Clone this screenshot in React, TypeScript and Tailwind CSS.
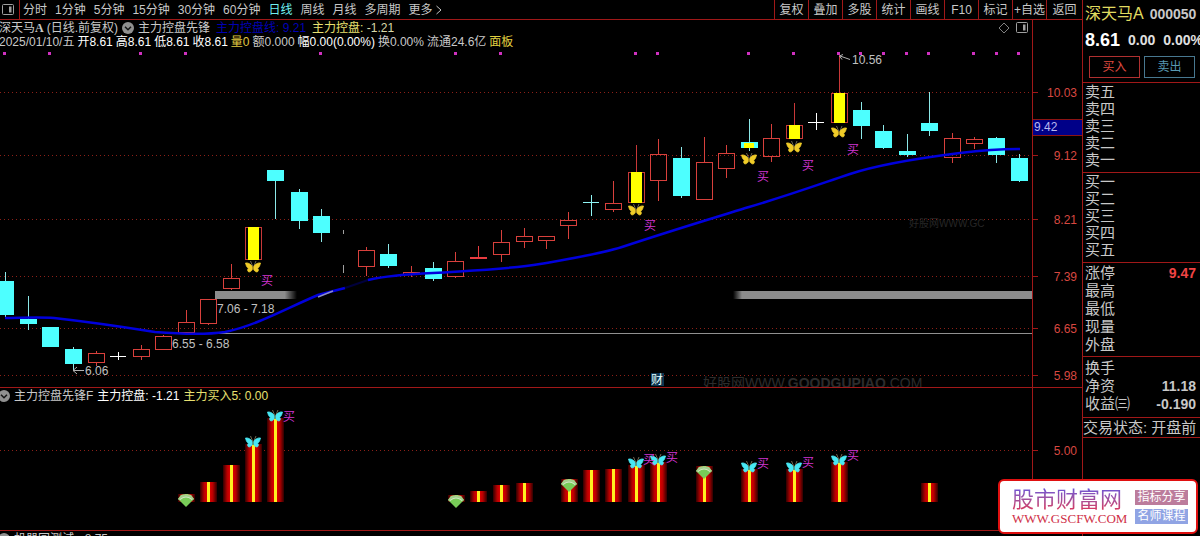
type Kind = 'up' | 'down' | 'signal' | 'downSignal' | 'cross' | 'downCross' | 'upLine';

type Candle = [x: number, high: number, top: number, bottom: number, low: number, kind: Kind];

const periods = ['分时', '1分钟', '5分钟', '15分钟', '30分钟', '60分钟', '日线', '周线', '月线', '多周期'];
const tools = ['复权', '叠加', '多股', '统计', '画线', 'F10', '标记', '+自选'];

const candles: Candle[] = [
    [5, 272, 281, 315, 318, 'down'],
    [28, 296, 319, 324, 330, 'down'],
    [50, 327, 327, 347, 347, 'down'],
    [73, 347, 349, 364, 370, 'down'],
    [96, 351, 353, 362, 366, 'up'],
    [118, 352, 356, 356, 360, 'cross'],
    [141, 345, 349, 356, 360, 'up'],
    [163, 335, 336, 349, 349, 'up'],
    [186, 310, 322, 332, 332, 'up'],
    [208, 299, 299, 323, 325, 'up'],
    [231, 264, 278, 288, 290, 'up'],
    [253, 227, 227, 259, 259, 'signal'],
    [275, 170, 170, 181, 219, 'down'],
    [299, 189, 192, 221, 229, 'down'],
    [321, 209, 216, 233, 242, 'down'],
    [366, 247, 250, 266, 276, 'up'],
    [388, 244, 254, 266, 268, 'down'],
    [411, 266, 272, 274, 277, 'up'],
    [433, 262, 268, 279, 281, 'down'],
    [455, 252, 261, 276, 278, 'up'],
    [478, 246, 258, 258, 259, 'upLine'],
    [501, 230, 242, 254, 262, 'up'],
    [524, 228, 236, 241, 248, 'up'],
    [546, 236, 236, 240, 249, 'up'],
    [568, 212, 220, 225, 239, 'up'],
    [591, 195, 202, 202, 216, 'downCross'],
    [613, 181, 203, 209, 212, 'up'],
    [636, 145, 172, 202, 202, 'signal'],
    [658, 139, 154, 180, 201, 'up'],
    [681, 147, 158, 196, 198, 'down'],
    [704, 137, 162, 199, 199, 'up'],
    [726, 145, 153, 168, 178, 'up'],
    [749, 119, 142, 148, 151, 'downSignal'],
    [771, 124, 138, 156, 162, 'up'],
    [794, 103, 125, 138, 138, 'signal'],
    [816, 113, 122, 122, 130, 'cross'],
    [839, 55, 93, 122, 122, 'signal'],
    [861, 102, 110, 126, 139, 'down'],
    [883, 125, 131, 148, 149, 'down'],
    [907, 134, 151, 155, 157, 'down'],
    [929, 92, 123, 131, 136, 'down'],
    [952, 133, 138, 157, 163, 'up'],
    [974, 137, 139, 143, 149, 'up'],
    [996, 137, 138, 155, 163, 'down'],
    [1019, 154, 158, 181, 182, 'down'],
];

const priceTicks: [number, string][] = [
    [92, '10.03'],
    [155, '9.12'],
    [219, '8.21'],
    [276, '7.39'],
    [328, '6.65'],
    [375, '5.98'],
];

const dots = [4, 49, 140, 185, 320, 455, 500, 635, 657, 748, 793, 838, 860, 883, 906, 928, 973, 996, 1018];

const signals: [number, number][] = [
    [253, 267],
    [636, 210],
    [749, 159],
    [794, 147],
    [839, 132],
];

const buyLabels: [number, number][] = [
    [267, 281],
    [650, 226],
    [763, 177],
    [808, 166],
    [853, 150],
];

// x, top, marker
const bars: [number, number, ('gem' | 'fly')?][] = [
    [186, 494, 'gem'],
    [208, 482],
    [231, 465],
    [253, 444, 'fly'],
    [275, 418, 'fly'],
    [456, 495, 'gem'],
    [478, 491],
    [501, 485],
    [524, 483],
    [569, 479, 'gem'],
    [591, 470],
    [613, 469],
    [636, 465, 'fly'],
    [658, 462, 'fly'],
    [704, 466, 'gem'],
    [749, 469, 'fly'],
    [794, 469, 'fly'],
    [839, 462, 'fly'],
    [929, 483],
];

const barBuyLabels: [number, number][] = [
    [289, 417],
    [649, 460],
    [672, 458],
    [763, 464],
    [808, 463],
    [853, 456],
];

function CandleShape({ data }: { data: Candle }) {
    const [x, high, top, bottom, low, kind] = data;
    if (kind === 'cross' || kind === 'downCross') {
        const color = kind === 'cross' ? '#ffffff' : '#8ff4f4';
        return <path d={`M${x + 0.5} ${high}V${low}M${x - 8} ${top + 0.5}h16`} stroke={color} fill="none" />;
    }
    if (kind === 'upLine') {
        return (
            <g stroke="#e83c40">
                <path d={`M${x + 0.5} ${high}V${low}`} />
                <path d={`M${x - 8} ${top}h17`} strokeWidth="2" />
            </g>
        );
    }
    if (kind === 'up') {
        return (
            <g stroke="#d8403c" fill="none">
                <path d={`M${x + 0.5} ${high}V${top}M${x + 0.5} ${bottom}V${low}`} />
                <rect x={x - 7.5} y={top + 0.5} width="16" height={bottom - top} />
            </g>
        );
    }
    if (kind === 'signal') {
        return (
            <g>
                <path d={`M${x + 0.5} ${high}V${top}`} stroke="#c83838" />
                <rect x={x - 7.5} y={top + 0.5} width="16" height={bottom - top} stroke="#c83838" fill="none" />
                <rect x={x - 5} y={top} width="11" height={bottom - top + 1} fill="#ffff00" />
            </g>
        );
    }
    return (
        <g>
            <path d={`M${x + 0.5} ${high}V${low}`} stroke="#8ce8e8" />
            <rect x={x - 8} y={top} width="17" height={bottom - top} fill="#4dffff" />
            {kind === 'downSignal' && <rect x={x - 5} y={top + 1} width="10" height={bottom - top - 1} fill="#ffff00" />}
        </g>
    );
}

function Butterfly({ x, y, color }: { x: number; y: number; color: string }) {
    return (
        <g transform={`translate(${x} ${y})`}>
            <path d="M0 0L-2.5 -6M0.5 0L3 -6" stroke="#8a8468" strokeWidth="0.8" fill="none" />
            <path
                d="M-0.5 0C-2 -3 -5 -4.5 -7.5 -4C-7 -2 -6.4 0.5 -4.6 1.2C-6 2.6 -5.4 4.6 -4 5C-2 5 -1 3 0 1.8C1 3 2 5 4 5C5.4 4.6 6 2.6 4.6 1.2C6.4 0.5 7 -2 7.5 -4C5 -4.5 2 -3 0.5 0Z"
                fill={color}
                stroke={color}
                strokeWidth="0.8"
            />
            <path d="M0 -1V3" stroke="#503c10" strokeWidth="0.8" />
        </g>
    );
}

function Gem({ x, y }: { x: number; y: number }) {
    return (
        <g transform={`translate(${x} ${y})`}>
            <path d="M-8 -1L-5 -5Q0 -6.5 5 -5L8 -1L0 7Z" fill="#78cc58" />
            <path d="M-8 -1L-5 -5Q0 -6.5 5 -5L8 -1L6 0.5Q0 -6 -6 0.5Z" fill="#a4d08c" />
            <path d="M-6 -0.5Q0 -5.5 6 -0.5" stroke="#dcecd0" strokeWidth="0.8" fill="none" />
        </g>
    );
}

function BuyLabels({ items }: { items: [number, number][] }) {
    return (
        <g fill="#d034d0" fontSize="12" textAnchor="middle">
            {items.map(([x, y]) => (
                <text key={x} x={x} y={y + 4}>买</text>
            ))}
        </g>
    );
}

function PanelIcon({ className }: { className: string }) {
    return (
        <svg viewBox="0 0 12 12" className={className} fill="none" stroke="#a0a0a0">
            <rect x="0.5" y="0.5" width="11" height="10" rx="1" />
            <rect x="7" y="2.5" width="2.5" height="6" fill="#a0a0a0" stroke="none" />
        </svg>
    );
}

function ChevronBadge() {
    return (
        <svg viewBox="0 0 12 12" className="w-3 h-3 shrink-0">
            <circle cx="6" cy="6" r="6" fill="#909090" />
            <path d="M3 4.8L6 7.8L9 4.8" stroke="#151515" strokeWidth="1.5" fill="none" />
        </svg>
    );
}

function Toolbar() {
    return (
        <nav className="flex h-5 border-b border-[#a01818] text-xs text-[#c8c8c8]">
            <button aria-label="侧栏" className="w-5 pl-0.5 border-r border-[#a01818]">
                <PanelIcon className="w-3 h-3" />
            </button>
            <div className="flex flex-1 gap-2 pl-[3px] leading-[18px]">
                {periods.map((name) => (
                    <button key={name} className={name === '日线' ? 'text-[#6ff0f0]' : ''}>{name}</button>
                ))}
                <button className="flex items-center gap-0.5">
                    更多
                    <svg viewBox="0 0 8 10" className="w-2 h-2.5" fill="none" stroke="#c8c8c8">
                        <path d="M1.5 1L6 5L1.5 9" />
                    </svg>
                </button>
            </div>
            <div className="flex leading-[18px]">
                {tools.map((name) => (
                    <button key={name} className="w-[34px] border-l border-[#a01818] whitespace-nowrap">{name}</button>
                ))}
                <button className="w-9 border-l border-[#a01818]">返回</button>
            </div>
        </nav>
    );
}

function PriceHeader() {
    return (
        <header className="flex h-7 text-xs leading-[14px] text-[#c8c8c8] whitespace-nowrap">
            <div className="flex-1 min-w-0 pt-px">
                <div className="flex items-center">
                    <span className="-ml-px">深天马<b className="font-['Liberation_Serif']">A</b></span>
                    <span className="ml-[3px]">(日线.前复权)</span>
                    <span className="mx-1 flex"><ChevronBadge /></span>
                    <span>主力控盘先锋</span>
                    <span className="ml-1.5 text-[#0000b4]">主力控盘线: 9.21</span>
                    <span className="ml-1.5 text-[#e8e070]">主力控盘: <span className="text-[#d8d8a8]">-1.21</span></span>
                    <span className="ml-auto mr-1 flex gap-1.5">
                        <svg viewBox="0 0 12 12" className="w-3 h-3" fill="none" stroke="#808080">
                            <path d="M6 1L11 6L6 11L1 6Z" />
                        </svg>
                        <PanelIcon className="w-3 h-3" />
                    </span>
                </div>
                <div className="-ml-px flex gap-[3px]">
                    <span>2025/01/10/五</span>
                    <span className="text-white">开8.61</span>
                    <span className="text-white">高8.61</span>
                    <span className="text-white">低8.61</span>
                    <span className="text-white">收8.61</span>
                    <span className="text-[#e0c840]">量0</span>
                    <span>额0.000</span>
                    <span className="text-white">幅0.00(0.00%)</span>
                    <span>换0.00%</span>
                    <span>流通24.6亿</span>
                    <span className="text-[#e0d040]">面板</span>
                </div>
            </div>
            <div className="w-[50px] border-l border-[#a01818]" />
        </header>
    );
}

function PriceChart() {
    return (
        <svg viewBox="0 48 1082 339" className="block w-full">
            <defs>
                <linearGradient id="bandLeft">
                    <stop offset="0.85" stopColor="#8c8c8c" />
                    <stop offset="1" stopColor="#000000" />
                </linearGradient>
                <linearGradient id="bandRight">
                    <stop offset="0" stopColor="#000000" />
                    <stop offset="0.03" stopColor="#8c8c8c" />
                </linearGradient>
            </defs>
            {priceTicks.map(([y, label]) => (
                <g key={label}>
                    <path d={`M0 ${y + 0.5}H1032`} stroke="#8c2018" strokeDasharray="1 3" />
                    <path d={`M1032 ${y + 0.5}h6`} stroke="#a01818" />
                    <text x="1077" y={y + 5} fill="#d84840" fontSize="12" textAnchor="end">{label}</text>
                </g>
            ))}
            <text x="909" y="227" fill="#262626" fontSize="10">好股网WWW.GC</text>
            <rect x="215" y="291" width="82" height="8" fill="url(#bandLeft)" />
            <rect x="733" y="291" width="299" height="8" fill="url(#bandRight)" />
            <path d="M209 333.5H1032" stroke="#909090" />
            {candles.map((c) => (
                <CandleShape key={c[0]} data={c} />
            ))}
            <path d="M343.5 230v4M343.5 265v8" stroke="#a0a0a0" />
            <path
                d="M5 318C20 318 38 317 54 318C90 322 130 328 155 332C180 334 205 335 225 332C255 326 285 309 318 295L345 288"
                stroke="#0000dc" strokeWidth="2.5" fill="none"
            />
            <path d="M345 288L368 280" stroke="#00003c" strokeWidth="2" fill="none" />
            <path
                d="M368 280C385 276 410 274 433 273C480 270 510 269 540 264C575 258 600 254 622 247C670 231 710 219 749 207C790 195 820 184 850 174C880 164 920 158 960 153C985 150 1000 149 1020 149"
                stroke="#0000dc" strokeWidth="2.5" fill="none"
            />
            <path d="M318 297L333 291" stroke="#8c8cc8" strokeWidth="1.5" />
            {dots.map((x) => (
                <rect key={x} x={x - 1} y="52" width="3" height="3" fill="#d030c0" />
            ))}
            {signals.map(([x, y]) => (
                <Butterfly key={x} x={x} y={y} color="#f0cc28" />
            ))}
            <BuyLabels items={buyLabels} />
            <g fill="#c0c0c0" fontSize="12">
                <text x="852" y="64">10.56</text>
                <text x="217" y="313">7.06 - 7.18</text>
                <text x="172" y="348">6.55 - 6.58</text>
                <text x="85" y="375">6.06</text>
            </g>
            <path d="M840 56L850 59.5M843 54.5L839.5 56L842 59.5M84 370.5H73M77 367L73 370.5L77 374" stroke="#b0b0b0" fill="none" />
            <rect x="651" y="373" width="13" height="13" fill="#0c3450" />
            <text x="657" y="384" fill="#e8ffff" fontSize="12" textAnchor="middle">财</text>
            <text x="703" y="388" fill="#2c2c2c" fontSize="14">好股网WWW.<tspan fontWeight="700">GOODGUPIAO</tspan>.COM</text>
            <path d="M1032.5 48V387" stroke="#a01818" />
            <rect x="1033" y="119" width="49" height="16" fill="#000088" />
            <path d="M1033 119.5h49M1033 135.5h49" stroke="#8c1414" />
            <text x="1034" y="131" fill="#b8b8f0" fontSize="12">9.42</text>
        </svg>
    );
}

function SignalChart() {
    return (
        <svg viewBox="0 404 1082 126" className="block w-full">
            <defs>
                <linearGradient id="bar">
                    <stop offset="0" stopColor="#300000" />
                    <stop offset="0.25" stopColor="#b80000" />
                    <stop offset="0.5" stopColor="#f00000" />
                    <stop offset="0.75" stopColor="#b80000" />
                    <stop offset="1" stopColor="#300000" />
                </linearGradient>
            </defs>
            <path d="M0 450.5H1032" stroke="#8c2018" strokeDasharray="1 3" />
            <path d="M1032 450.5h6" stroke="#a01818" />
            <text x="1077" y="455" fill="#d84840" fontSize="12" textAnchor="end">5.00</text>
            <path d="M1032.5 404V530" stroke="#a01818" />
            {bars.map(([x, top]) => (
                <g key={x}>
                    <rect x={x - 8} y={top} width="17" height={502 - top} fill="url(#bar)" />
                    <rect x={x - 1} y={top} width="3" height={502 - top} fill="#fff020" />
                </g>
            ))}
            {bars.map(([x, top, marker]) => {
                if (marker === 'fly') return <Butterfly key={x} x={x} y={top - 2} color="#48e8f4" />;
                if (marker === 'gem') return <Gem key={x} x={x} y={top + 6} />;
                return null;
            })}
            <BuyLabels items={barBuyLabels} />
        </svg>
    );
}

function Labels({ items }: { items: string[] }) {
    return (
        <>
            {items.map((name) => (
                <div key={name}>{name}</div>
            ))}
        </>
    );
}

function QuotePanel() {
    return (
        <aside className="w-[118px] shrink-0 border-l border-[#a01818] overflow-hidden whitespace-nowrap text-[15px] text-[#c8c8c8]">
            <div className="h-[83px] pl-0.5 border-b border-[#a01818]">
                <div className="flex items-center gap-1.5 pt-0.5 leading-6">
                    <span className="text-base text-[#e0dc60]">深天马A</span>
                    <span className="text-sm font-bold">000050</span>
                </div>
                <div className="flex items-center gap-2 h-7 font-bold text-sm text-[#e0e0e0]">
                    <span className="text-lg text-white">8.61</span>
                    <span>0.00</span>
                    <span>0.00%</span>
                </div>
                <div className="flex gap-1 pl-1 pt-0.5 text-xs">
                    <button className="w-[51px] h-[22px] border border-[#b03030] text-[#e04c40]">买入</button>
                    <button className="w-[51px] h-[22px] border border-[#487890] text-[#5898b0]">卖出</button>
                </div>
            </div>
            <div className="pl-0.5 pb-1 leading-[17px] border-b border-[#a01818]">
                <Labels items={['卖五', '卖四', '卖三', '卖二', '卖一']} />
            </div>
            <div className="pl-0.5 pb-1 leading-[17px] border-b border-[#a01818]">
                <Labels items={['买一', '买二', '买三', '买四', '买五']} />
            </div>
            <div className="pl-0.5 pt-px pb-0.5 leading-[18px] border-b border-[#a01818]">
                <div className="flex justify-between pr-1">
                    涨停<b className="text-sm leading-[18px] text-[#f04444]">9.47</b>
                </div>
                <Labels items={['最高', '最低', '现量', '外盘']} />
            </div>
            <div className="pl-0.5 pt-0.5 pb-1 leading-[18px] border-b border-[#a01818]">
                <div>换手</div>
                <div className="flex justify-between pr-1">净资<b className="text-sm leading-[18px]">11.18</b></div>
                <div className="flex justify-between pr-1">收益㈢<b className="text-sm leading-[18px]">-0.190</b></div>
            </div>
            <div className="leading-[19px] border-b border-[#a01818]">交易状态: 开盘前</div>
        </aside>
    );
}

function SiteBadge() {
    return (
        <div className="absolute right-[2px] bottom-[2px] flex items-center justify-between w-[200px] h-[55px] pl-3 pr-2 rounded-md border-2 border-[#e01010] bg-white">
            <div>
                <div className="text-[22px] leading-6 bg-linear-to-b from-[#6a50d8] to-[#e02850] bg-clip-text text-transparent">股市财富网</div>
                <div className="font-['Liberation_Serif'] text-[13px] leading-[14px] text-[#d03048]">WWW.GSCFW.COM</div>
            </div>
            <div className="flex flex-col gap-1 text-xs leading-[15px] text-white text-center">
                <span className="w-[53px] bg-[#bc7c9c]">指标分享</span>
                <span className="w-[53px] bg-[#90a4e4]">名师课程</span>
            </div>
        </div>
    );
}

export default function App() {
    return (
        <div className="relative flex h-screen overflow-hidden bg-black font-['Liberation_Sans','Noto_Sans_CJK_SC',sans-serif]">
            <main className="flex-1 min-w-0">
                <Toolbar />
                <section className="border-b border-[#a01818]">
                    <PriceHeader />
                    <PriceChart />
                </section>
                <section className="border-b border-[#a01818]">
                    <header className="flex h-4 text-xs leading-4 text-[#c8c8c8]">
                        <div className="flex flex-1 items-center gap-1">
                            <span className="-ml-0.5 flex"><ChevronBadge /></span>
                            <span>主力控盘先锋F</span>
                            <span className="text-white">主力控盘: -1.21</span>
                            <span className="text-[#e8e070]">主力买入5: 0.00</span>
                        </div>
                        <div className="w-[50px] border-l border-[#a01818]" />
                    </header>
                    <SignalChart />
                </section>
                <header className="flex items-center gap-1 h-4 text-xs leading-4 text-[#c8c8c8]">
                    <span className="-ml-0.5 flex"><ChevronBadge /></span>
                    <span>机器回测试: -8.75</span>
                </header>
            </main>
            <QuotePanel />
            <SiteBadge />
        </div>
    );
}
